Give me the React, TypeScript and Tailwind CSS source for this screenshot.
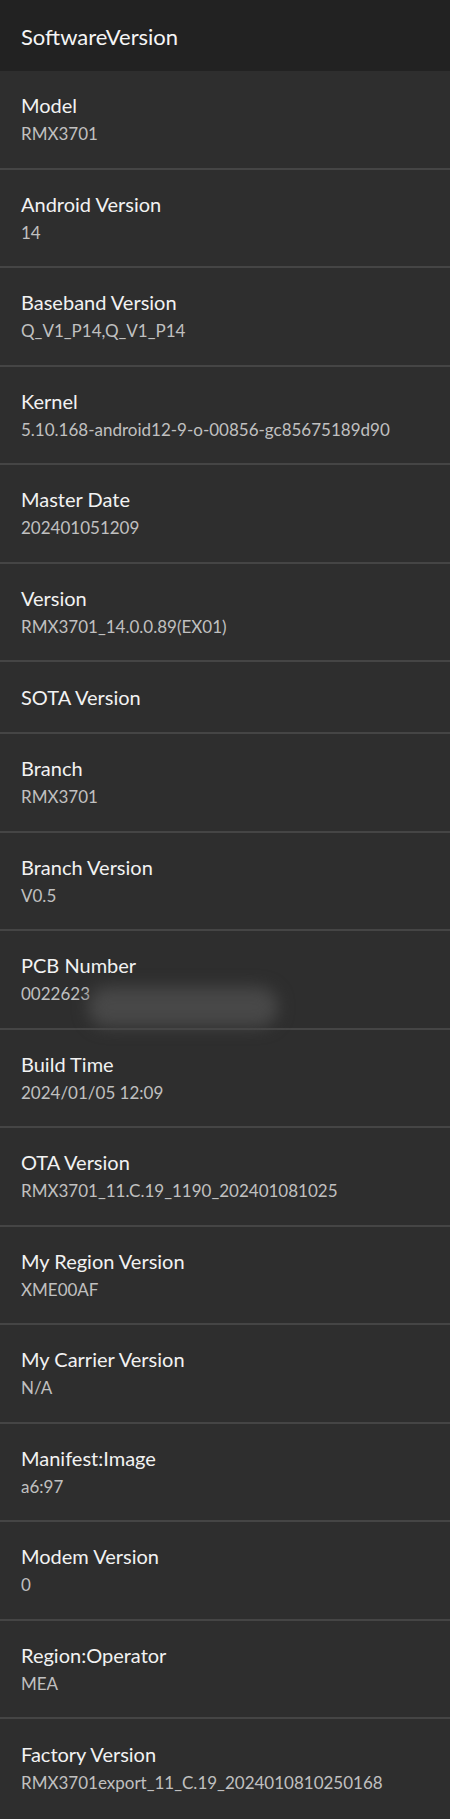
const rows: { label: string; value?: string; blur?: boolean }[] = [
  { label: "Model", value: "RMX3701" },
  { label: "Android Version", value: "14" },
  { label: "Baseband Version", value: "Q_V1_P14,Q_V1_P14" },
  { label: "Kernel", value: "5.10.168-android12-9-o-00856-gc85675189d90" },
  { label: "Master Date", value: "202401051209" },
  { label: "Version", value: "RMX3701_14.0.0.89(EX01)" },
  { label: "SOTA Version" },
  { label: "Branch", value: "RMX3701" },
  { label: "Branch Version", value: "V0.5" },
  { label: "PCB Number", value: "0022623", blur: true },
  { label: "Build Time", value: "2024/01/05 12:09" },
  { label: "OTA Version", value: "RMX3701_11.C.19_1190_202401081025" },
  { label: "My Region Version", value: "XME00AF" },
  { label: "My Carrier Version", value: "N/A" },
  { label: "Manifest:Image", value: "a6:97" },
  { label: "Modem Version", value: "0" },
  { label: "Region:Operator", value: "MEA" },
  { label: "Factory Version", value: "RMX3701export_11_C.19_2024010810250168" },
];

const Row = ({ label, value, blur }: { label: string; value?: string; blur?: boolean }) => (
  <div
    className={`relative flex flex-col justify-center px-[21px] border-b-2 border-[#454545] last:border-b-0 ${
      value === undefined ? "h-[72px]" : "h-[98.5px]"
    }`}
  >
    <span className="text-[20px] leading-[26px] text-[#f2f2f2]">{label}</span>
    {value !== undefined && (
      <span className="text-[17px] leading-[24px] mt-[4px] text-[#c0c0c0]">{value}</span>
    )}
    {blur && (
      <div className="absolute left-[88px] top-[56px] w-[190px] h-[40px] rounded-full bg-[#484848] blur-[8px]" />
    )}
  </div>
);

export default function App() {
  return (
    <div
      className="w-[450px] h-[1819px] overflow-hidden bg-[#2e2e2e]"
      style={{ fontFamily: "Lato, 'Noto Sans', sans-serif" }}
    >
      <div className="h-[71px] flex items-center px-[21px] bg-[#222222]">
        <h1 className="text-[22px] mt-[2px] text-[#f5f5f5]">SoftwareVersion</h1>
      </div>
      {rows.map((r) => (
        <Row key={r.label} {...r} />
      ))}
    </div>
  );
}
